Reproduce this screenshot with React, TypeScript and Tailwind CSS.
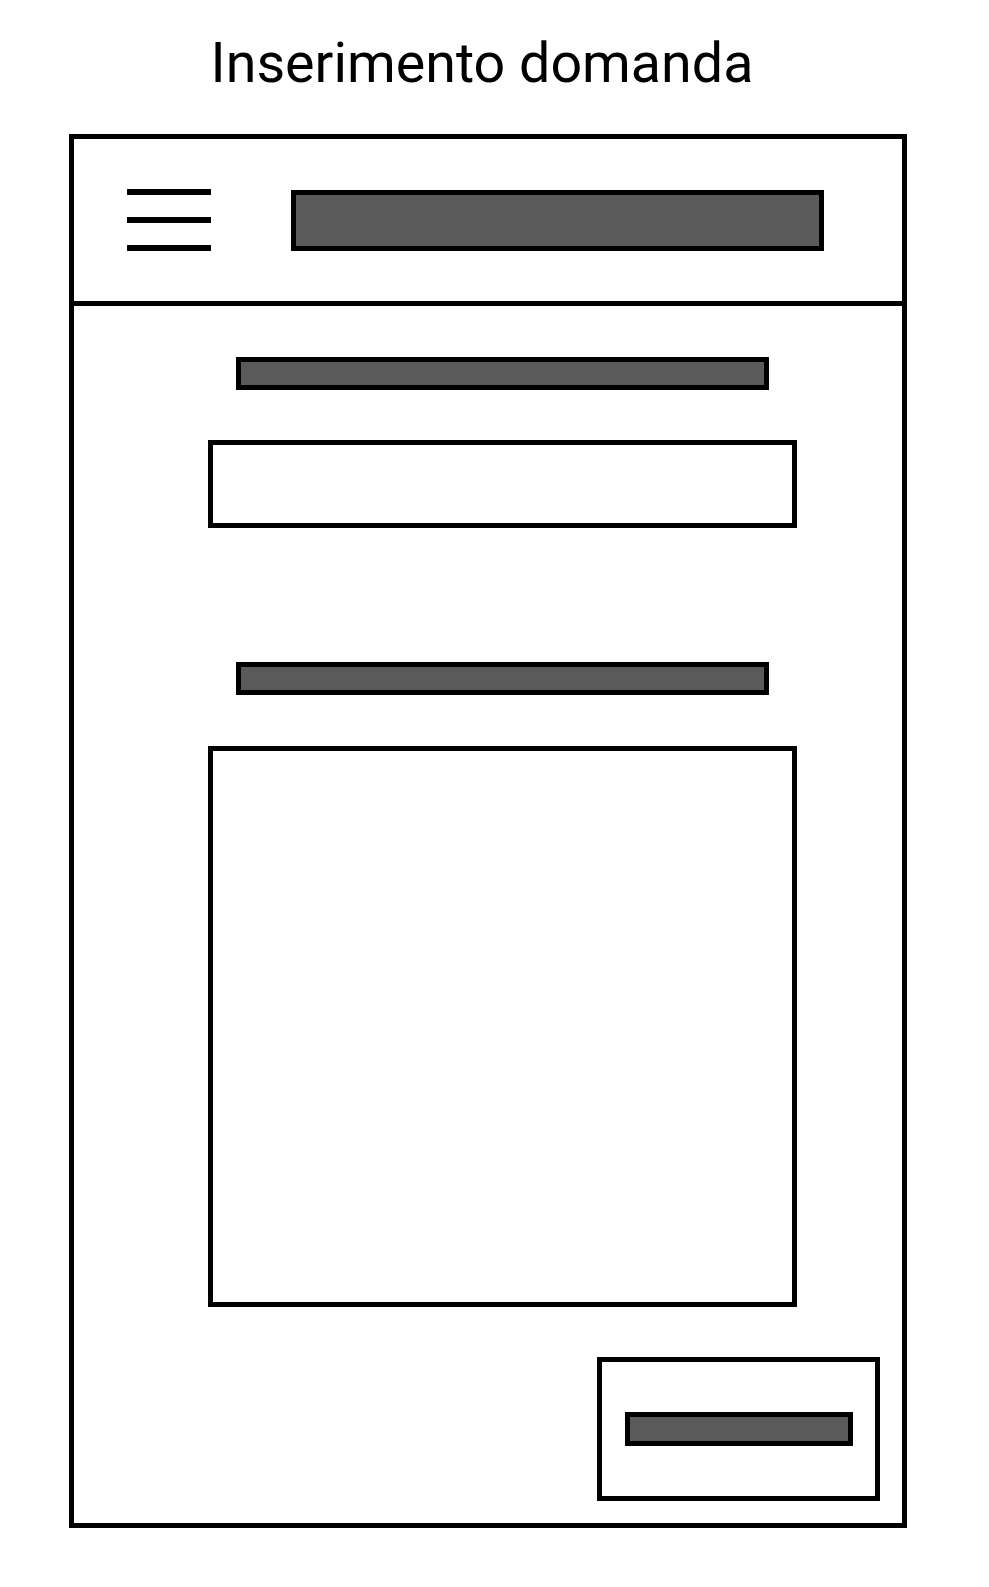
import React from 'react';

// Wireframe: mobile page for entering a question
function Bar({ className }: { className: string }) {
  return <div className={`border-[5px] border-black bg-[#5a5a5a] ${className}`} />;
}

export default function App() {
  return (
    <div className="min-h-[1587px] w-[989px] bg-white" style={{ fontFamily: 'Roboto, "Liberation Sans", sans-serif' }}>
      <h1 className="pt-[35px] pr-[25px] text-center text-[55.6px] leading-[56px] font-normal text-black">
        Inserimento domanda
      </h1>

      <div className="ml-[69px] mt-[43px] w-[838px] border-[5px] border-black">
        {/* header */}
        <div className="flex h-[167px] items-center border-b-[5px] border-black pl-[53px]">
          <div className="flex w-[84px] flex-col gap-[22px]">
            <span className="block h-[6px] bg-black" />
            <span className="block h-[6px] bg-black" />
            <span className="block h-[6px] bg-black" />
          </div>
          <Bar className="ml-[80px] h-[61px] w-[533px]" />
        </div>

        {/* form */}
        <div className="flex flex-col pt-[51px] pb-[22px]">
          <Bar className="ml-[162px] h-[33px] w-[533px]" />
          <div className="ml-[134px] mt-[50px] h-[88px] w-[589px] border-[5px] border-black" />

          <Bar className="ml-[162px] mt-[134px] h-[33px] w-[533px]" />
          <div className="ml-[134px] mt-[51px] h-[561px] w-[589px] border-[5px] border-black" />

          <div className="mt-[50px] mr-[22px] flex h-[144px] w-[283px] items-center justify-center self-end border-[5px] border-black">
            <Bar className="h-[34px] w-[228px]" />
          </div>
        </div>
      </div>
    </div>
  );
}
